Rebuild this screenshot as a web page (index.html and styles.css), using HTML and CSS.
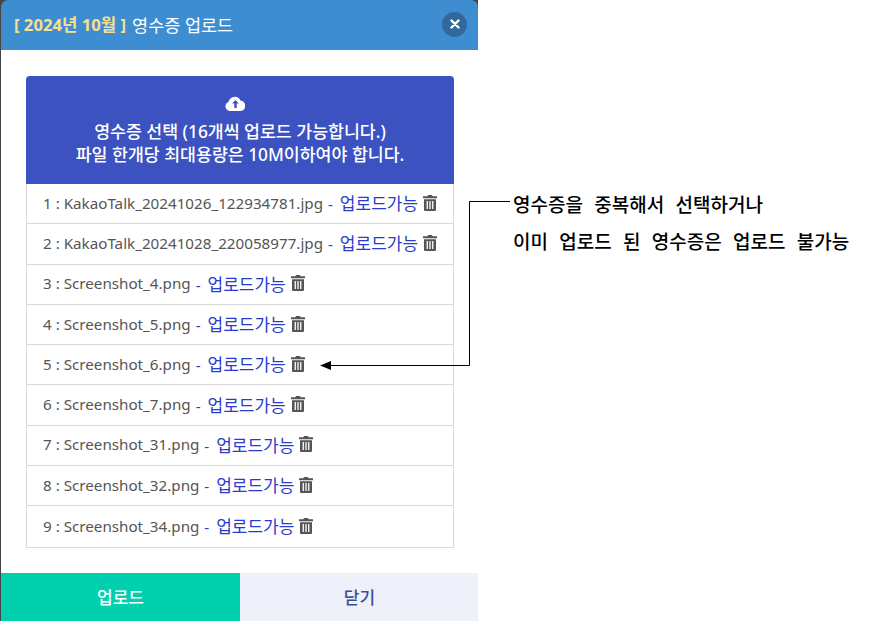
FILE: index.html
```html
<!DOCTYPE html>
<html lang="ko">
<head>
<meta charset="utf-8">
<title>영수증 업로드</title>
<link rel="stylesheet" href="styles.css">
</head>
<body>
<svg width="0" height="0" class="defs">
  <symbol id="trash" viewBox="0 0 14 16">
    <path fill="#555" d="M5 0h4l.6 1.200H14v2H0v-2h4.400zM1 4.200h12V15a1 1 0 0 1-1 1H2a1 1 0 0 1-1-1zM3.600 6v8h1.300V6zm2.750 0v8h1.300V6zm2.750 0v8h1.300V6z"/>
  </symbol>
</svg>
<main class="dialog">
  <header class="head">
    <h1 class="title"><span class="month">[ 2024년 10월 ]</span> <span class="name">영수증 업로드</span></h1>
    <button class="close" type="button" aria-label="닫기">
      <svg width="10" height="10" viewBox="0 0 10 10"><path d="M1.500 1.500l7 7M8.500 1.500l-7 7" stroke="#fff" stroke-width="2.400" stroke-linecap="round"/></svg>
    </button>
  </header>
  <section class="content">
    <div class="drop">
      <svg class="cloud" width="21" height="15" viewBox="0 0 21 15"><path fill="#fff" d="M4.800 15A4.600 4.600 0 0 1 3.500 6.100 6.300 6.300 0 0 1 15.400 4.400 5.400 5.400 0 0 1 16 15z"/><path fill="#3c52c0" d="M10.500 4l3.400 3.500h-2.200V12H9.300V7.500H7.100z"/></svg>
      <p class="drop-text">영수증 선택 (16개씩 업로드 가능합니다.)</p>
      <p class="drop-text">파일 한개당 최대용량은 10M이하여야 합니다.</p>
    </div>
    <ul class="files">
      <li class="file">1 : KakaoTalk_20241026_122934781.jpg <span class="status">- <span class="ko">업로드가능</span></span> <svg class="bin"><use href="#trash"/></svg></li>
      <li class="file">2 : KakaoTalk_20241028_220058977.jpg <span class="status">- <span class="ko">업로드가능</span></span> <svg class="bin"><use href="#trash"/></svg></li>
      <li class="file">3 : Screenshot_4.png <span class="status">- <span class="ko">업로드가능</span></span> <svg class="bin"><use href="#trash"/></svg></li>
      <li class="file">4 : Screenshot_5.png <span class="status">- <span class="ko">업로드가능</span></span> <svg class="bin"><use href="#trash"/></svg></li>
      <li class="file">5 : Screenshot_6.png <span class="status">- <span class="ko">업로드가능</span></span> <svg class="bin"><use href="#trash"/></svg></li>
      <li class="file">6 : Screenshot_7.png <span class="status">- <span class="ko">업로드가능</span></span> <svg class="bin"><use href="#trash"/></svg></li>
      <li class="file">7 : Screenshot_31.png <span class="status">- <span class="ko">업로드가능</span></span> <svg class="bin"><use href="#trash"/></svg></li>
      <li class="file">8 : Screenshot_32.png <span class="status">- <span class="ko">업로드가능</span></span> <svg class="bin"><use href="#trash"/></svg></li>
      <li class="file">9 : Screenshot_34.png <span class="status">- <span class="ko">업로드가능</span></span> <svg class="bin"><use href="#trash"/></svg></li>
    </ul>
  </section>
  <footer class="actions">
    <button class="btn btn-upload" type="button">업로드</button>
    <button class="btn btn-close" type="button">닫기</button>
  </footer>
</main>
<svg class="leader" width="190" height="170" viewBox="0 0 190 170"><path d="M190 .5H149.500V164.500H10" fill="none" stroke="#000"/><path d="M0 164.500L11 160V169z" fill="#000"/></svg>
<aside class="note">
  <p class="note-line">영수증을 중복해서 선택하거나</p>
  <p class="note-line">이미 업로드 된 영수증은 업로드 불가능</p>
</aside>
</body>
</html>
```
FILE: styles.css
```css
* { box-sizing: border-box; }
html, body { margin: 0; padding: 0; }
body {
  width: 886px;
  height: 621px;
  overflow: hidden;
  position: relative;
  background: #fff;
  font-family: "Noto Sans", "Noto Sans CJK KR", sans-serif;
}
.defs { position: absolute; }
.dialog {
  width: 478px;
  height: 621px;
  display: flex;
  flex-direction: column;
  background: #444;
  border-left: 1px solid #444;
}
.head {
  height: 50px;
  flex: none;
  display: flex;
  align-items: center;
  justify-content: space-between;
  padding: 0 11px 2px 13px;
  background: #3f8dd1;
  border-radius: 7px 7px 0 0;
}
.title {
  margin: 0;
  font-size: 17.5px;
  font-weight: 400;
  color: #fff;
  display: flex;
  align-items: center;
  gap: 6px;
}
.month { color: #f7e08c; font-weight: 700; font-size: 16.7px; }
.close {
  width: 25px;
  height: 25px;
  padding: 0;
  border: 0;
  border-radius: 50%;
  background: #33689c;
  display: flex;
  align-items: center;
  justify-content: center;
}
.content {
  flex: 1;
  padding: 26px 24px 0 25px;
  background: #fff;
}
.drop {
  height: 108px;
  padding-top: 20px;
  border-radius: 4px 4px 0 0;
  background: #3c52c0;
  text-align: center;
  color: #fff;
}
.cloud { display: block; margin: 0 0 9px 199px; }
.drop-text {
  margin: 0;
  font-size: 17.3px;
  line-height: 23px;
  font-weight: 500;
}
.files {
  margin: 0;
  padding: 0;
  list-style: none;
  border: 1px solid #d8d8d8;
  border-top: 0;
}
.file {
  height: 40.3px;
  padding: 0 0 2px 16px;
  display: flex;
  align-items: center;
  gap: 5px;
  font-size: 15.2px;
  color: #555;
  border-bottom: 1px solid #d8d8d8;
  white-space: nowrap;
}
.file:last-child { border-bottom: 0; }
.status { color: #2a3bd0; }
.ko { font-size: 17px; margin-left: 3px; }
.bin { width: 14px; height: 16px; }
.actions {
  height: 48px;
  flex: none;
  display: flex;
}
.btn {
  flex: 1;
  border: 0;
  padding: 0 0 2px;
  font: 500 17px "Noto Sans", "Noto Sans CJK KR", sans-serif;
}
.btn-upload { flex: 0 0 239px; background: #00d0ae; color: #fff; }
.btn-close { background: #eef1fa; color: #3c5096; padding-left: 1px; }
.leader {
  position: absolute;
  left: 320px;
  top: 201px;
}
.note {
  position: absolute;
  left: 513px;
  top: 185px;
  color: #000;
  font-family: "Noto Sans CJK KR", sans-serif;
  font-size: 19px;
  font-weight: 500;
  word-spacing: 6px;
}
.note-line {
  margin: 0;
  line-height: 37px;
}
```
